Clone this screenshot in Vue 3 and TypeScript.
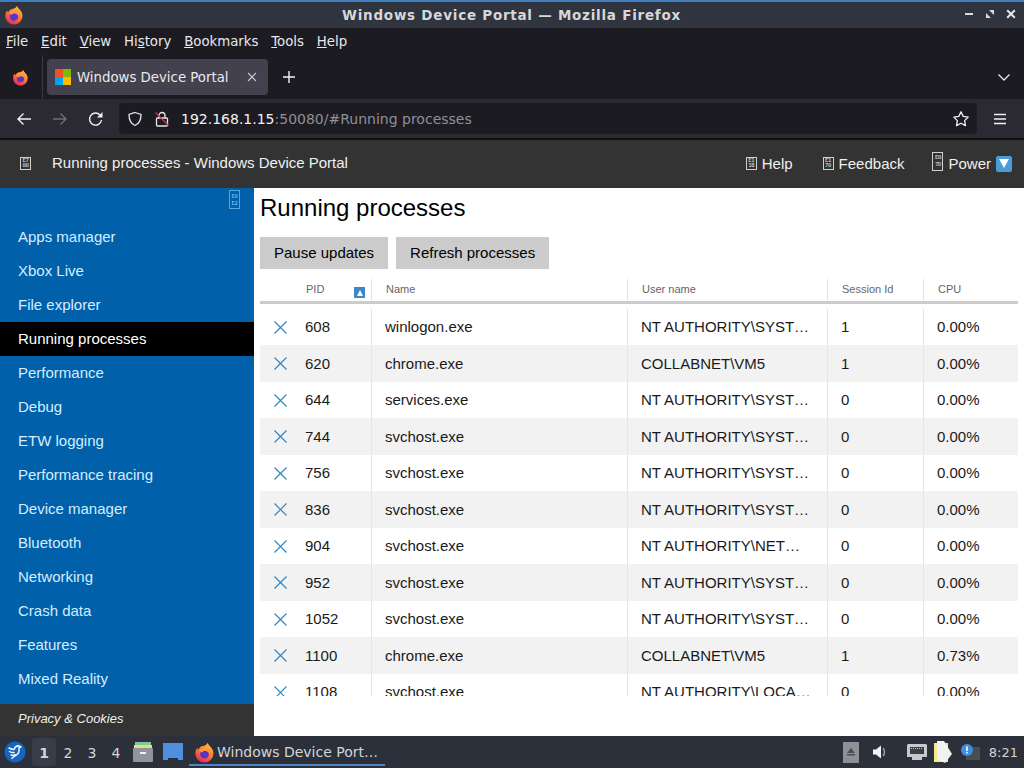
<script setup lang="ts">
interface Proc { pid: number; name: string; user: string; session: number; cpu: string }
const menus: [string, string, string][] = [
  ['', 'F', 'ile'], ['', 'E', 'dit'], ['', 'V', 'iew'], ['Hi', 's', 'tory'],
  ['', 'B', 'ookmarks'], ['', 'T', 'ools'], ['', 'H', 'elp'],
]
const nav = ['Apps manager', 'Xbox Live', 'File explorer', 'Running processes', 'Performance', 'Debug', 'ETW logging', 'Performance tracing', 'Device manager', 'Bluetooth', 'Networking', 'Crash data', 'Features', 'Mixed Reality']
const sys = 'NT AUTHORITY\\SYSTEM'
const procs: Proc[] = [
  { pid: 608, name: 'winlogon.exe', user: sys, session: 1, cpu: '0.00%' },
  { pid: 620, name: 'chrome.exe', user: 'COLLABNET\\VM5', session: 1, cpu: '0.00%' },
  { pid: 644, name: 'services.exe', user: sys, session: 0, cpu: '0.00%' },
  { pid: 744, name: 'svchost.exe', user: sys, session: 0, cpu: '0.00%' },
  { pid: 756, name: 'svchost.exe', user: sys, session: 0, cpu: '0.00%' },
  { pid: 836, name: 'svchost.exe', user: sys, session: 0, cpu: '0.00%' },
  { pid: 904, name: 'svchost.exe', user: 'NT AUTHORITY\\NETWORK', session: 0, cpu: '0.00%' },
  { pid: 952, name: 'svchost.exe', user: sys, session: 0, cpu: '0.00%' },
  { pid: 1052, name: 'svchost.exe', user: sys, session: 0, cpu: '0.00%' },
  { pid: 1100, name: 'chrome.exe', user: 'COLLABNET\\VM5', session: 1, cpu: '0.73%' },
  { pid: 1108, name: 'svchost.exe', user: 'NT AUTHORITY\\LOCAL SERVICE', session: 0, cpu: '0.00%' },
]
</script>

<template>
  <div class="screen">
    <div class="wm-strip"></div>
    <div class="titlebar">
      <svg class="ff-title" viewBox="0 0 20 20"><use href="#ff" /></svg>
      <span class="title-text">Windows Device Portal — Mozilla Firefox</span>
      <div class="wm-btns">
        <svg width="10" height="10" viewBox="0 0 10 10"><rect x="1" y="4" width="8" height="2" fill="#d8dade" /></svg>
        <svg width="10" height="10" viewBox="0 0 10 10"><path d="M4 1h5v5zM1 4l5 5H1z" fill="#d8dade" /></svg>
        <svg width="10" height="10" viewBox="0 0 10 10"><path d="M1.200 1.200l7.600 7.600M8.800 1.200L1.200 8.800" stroke="#e4e6ea" stroke-width="2" /></svg>
      </div>
    </div>
    <svg width="0" height="0" class="defs">
      <defs>
        <linearGradient id="ffg" x1="0.8" y1="0" x2="0.3" y2="1">
          <stop offset="0" stop-color="#ffc23a" />
          <stop offset="0.5" stop-color="#ff7a35" />
          <stop offset="1" stop-color="#e5265f" />
        </linearGradient>
        <g id="ff">
          <path d="M13 .8c.6 2.400 2.400 3 3.700 5 1.300 1.800 1.800 3.500 1.800 5.200a8.600 8.600 0 0 1-17.200 0c0-2.200.7-4.300 1.900-5.600.1 1 .5 1.600 1 2 .8-2.200 2.500-3.300 4.300-3.500 1.800-.3 3.700-1 4.500-3.100z" fill="url(#ffg)" />
          <circle cx="10" cy="11.500" r="4.200" fill="#5a35c8" />
          <path d="M5.500 8c1.500-2 5-2.800 7.500-1 1.500 1 2.300 3 1.900 5-.5-1.700-1.700-3.100-3.700-3.400-1.500-.2-2.700.3-3.500 1.300z" fill="#ff9a3c" />
        </g>
      </defs>
    </svg>
    <div class="menubar">
      <span v-for="m in menus" :key="m[1]" class="menu">{{ m[0] }}<u>{{ m[1] }}</u>{{ m[2] }}</span>
    </div>
    <div class="tabbar">
      <svg class="ff-tab" viewBox="0 0 20 20"><use href="#ff" /></svg>
      <div class="tab-sep"></div>
      <div class="tab">
        <span class="winlogo"><i class="q1"></i><i class="q2"></i><i class="q3"></i><i class="q4"></i></span>
        <span class="tab-text">Windows Device Portal</span>
        <svg class="tab-x" width="10" height="10" viewBox="0 0 10 10"><path d="M1 1l8 8M9 1l-8 8" stroke="#c9c9ce" stroke-width="1.100" /></svg>
      </div>
      <svg class="plus" width="14" height="14" viewBox="0 0 14 14"><path d="M7 1v12M1 7h12" stroke="#f3f3f5" stroke-width="1.400" /></svg>
      <svg class="chev" width="14" height="14" viewBox="0 0 14 14"><path d="M1.500 4.500L7 10l5.500-5.500" stroke="#e8e8ea" stroke-width="1.300" fill="none" /></svg>
    </div>
    <div class="navbar">
      <svg class="nb back" width="16" height="16" viewBox="0 0 16 16"><path d="M15 8H2M7.500 2.500L2 8l5.500 5.500" stroke="#f0f0f3" stroke-width="1.400" fill="none" /></svg>
      <svg class="nb fwd" width="16" height="16" viewBox="0 0 16 16"><path d="M1 8h13M8.500 2.500L14 8l-5.500 5.500" stroke="#6f6e77" stroke-width="1.400" fill="none" /></svg>
      <svg class="nb reload" width="16" height="16" viewBox="0 0 16 16"><path d="M13.500 9a6 6 0 1 1-1.500-5" stroke="#f0f0f3" stroke-width="1.400" fill="none" /><path d="M14.500 1v5.500H9z" fill="#f0f0f3" /></svg>
      <div class="urlbar">
        <svg class="shield" width="16" height="16" viewBox="0 0 16 16"><path d="M8 1.500l6 2c0 5-1.500 9-6 11-4.500-2-6-6-6-11z" stroke="#e6e6e9" stroke-width="1.300" fill="none" /></svg>
        <svg class="lock" width="16" height="16" viewBox="0 0 16 16"><rect x="2.500" y="7" width="11" height="8" rx="1" stroke="#e6e6e9" stroke-width="1.300" fill="none" /><path d="M5 7V4.500a3 3 0 0 1 6 0V7" stroke="#e6e6e9" stroke-width="1.300" fill="none" /><path d="M1.500 1.500l13 13" stroke="#e0304a" stroke-width="1.300" /></svg>
        <span class="url"><span class="host">192.168.1.15</span>:50080/#Running processes</span>
        <svg class="star" width="18" height="18" viewBox="0 0 18 18"><path d="M9 1.800l2.200 4.600 5 .7-3.600 3.500.9 5L9 13.200l-4.500 2.400.9-5L1.800 7.100l5-.7z" stroke="#f0f0f3" stroke-width="1.300" fill="none" stroke-linejoin="round" /></svg>
      </div>
      <svg class="burger" width="14" height="12" viewBox="0 0 14 12"><path d="M1 1.500h12M1 6h12M1 10.500h12" stroke="#f0f0f3" stroke-width="1.300" /></svg>
    </div>
    <div class="chrome-line"></div>

    <header class="portal-head">
      <span class="hex hex-menu"><b>E7</b><b>00</b></span>
      <span class="portal-title">Running processes - Windows Device Portal</span>
      <div class="portal-actions">
        <span class="action act-help"><span class="hex"><b>E1</b><b>1B</b></span>Help</span>
        <span class="action act-feedback"><span class="hex"><b>E1</b><b>70</b></span>Feedback</span>
        <span class="action power"><span class="hex hex-tall"><b>E0</b><b>7D</b></span>Power<span class="down-btn"><i></i></span></span>
      </div>
    </header>

    <div class="main">
      <aside class="sidebar">
        <div class="collapse"><span class="hex hex-side"><b>E0</b><b>E2</b></span></div>
        <nav class="nav-list">
          <a v-for="n in nav" :key="n" class="nav-item" :class="{ active: n === 'Running processes' }">{{ n }}</a>
        </nav>
        <div class="privacy">Privacy &amp; Cookies</div>
      </aside>
      <section class="content">
        <h1>Running processes</h1>
        <div class="buttons">
          <button class="btn pause">Pause updates</button>
          <button class="btn">Refresh processes</button>
        </div>
        <div class="table">
          <div class="thead grid">
            <div class="th th-pid">PID<span class="sort"><i></i></span></div>
            <div class="th">Name</div>
            <div class="th">User name</div>
            <div class="th">Session Id</div>
            <div class="th">CPU</div>
          </div>
          <div class="tbody">
            <div v-for="p in procs" :key="p.pid" class="row grid">
              <div class="td td-pid">
                <svg class="kill" width="13" height="13" viewBox="0 0 13 13"><path d="M.5.500l12 12M12.500.500l-12 12" stroke="#2a84c0" stroke-width="1.100" /></svg>
                <span>{{ p.pid }}</span>
              </div>
              <div class="td">{{ p.name }}</div>
              <div class="td user"><span class="ell">{{ p.user }}</span></div>
              <div class="td">{{ p.session }}</div>
              <div class="td">{{ p.cpu }}</div>
            </div>
          </div>
        </div>
      </section>
    </div>

    <footer class="taskbar">
      <svg class="start" width="22" height="22" viewBox="0 0 22 22"><circle cx="11" cy="11" r="10.500" fill="#1565c0" /><path d="M5 7c2 1 3.500 1.500 5 1.500M5.500 10.500c1.500 1 3 1.300 4.500 1M7 14c2 .5 3 .3 4-.5M10 8.500c1-2.500 3-4 5-3.500l2 1-2 .8c.5 3-.5 6-3 7.500-1 .7-2.500 1.200-4 3" stroke="#eef5fc" stroke-width="1.500" fill="none" stroke-linecap="round" stroke-linejoin="round" /></svg>
      <div class="workspaces">
        <span class="ws ws-on">1</span><span class="ws">2</span><span class="ws">3</span><span class="ws">4</span>
      </div>
      <svg class="tb-files" width="22" height="22" viewBox="0 0 22 22"><rect x="3" y="1" width="16" height="4" fill="#7ec99a" /><rect x="2" y="4" width="18" height="4" fill="#e8d98a" /><rect x="1" y="7" width="20" height="14" rx="1" fill="#8f959c" /><rect x="8" y="11" width="6" height="2" fill="#f2f2f2" /></svg>
      <svg class="tb-win" width="20" height="18" viewBox="0 0 20 18"><path d="M0 0h20v17h-5v-2H5v2H0z" fill="#4f8fe0" /></svg>
      <div class="task">
        <svg width="21" height="21" viewBox="0 0 20 20"><use href="#ff" /></svg>
        <span>Windows Device Port…</span>
      </div>
      <div class="tray">
        <span class="eject"><svg width="10" height="8" viewBox="0 0 10 8"><path d="M5 0l4 5H1z" fill="#4a4d52" /><rect x="1" y="6" width="8" height="1.500" fill="#4a4d52" /></svg></span>
        <svg class="vol" width="16" height="16" viewBox="0 0 16 16"><path d="M1 5.500h3L9 1.500v13l-5-4H1z" fill="#f2f3f5" /><path d="M11 4c2 2 2 6 0 8" stroke="#9aa0a8" stroke-width="1.500" fill="none" /></svg>
        <svg class="net" width="20" height="16" viewBox="0 0 20 16"><path d="M1 0h18l1 1v12h-5v3H5v-3H0V1z" fill="#c6c8cb" /><rect x="3" y="3" width="14" height="7" fill="#3a3e46" /><path d="M4 4.500h12" stroke="#c6c8cb" stroke-width="1" stroke-dasharray="1 1" /></svg>
        <svg class="notes" width="20" height="24" viewBox="0 0 20 24"><rect x="1" y="3" width="14" height="19" fill="#f4ec8a" /><path d="M4 1l7 0 8 13-7 9-8-4z" fill="#f2f2f2" /></svg>
        <span class="notify"><svg width="20" height="18" viewBox="0 0 20 18"><rect x="6" y="4" width="14" height="13" fill="#4a4d52" /><circle cx="7" cy="7" r="6" fill="#3d8fe0" /><rect x="6.200" y="3.500" width="1.600" height="4.500" fill="#fff" /><rect x="6.200" y="9" width="1.600" height="1.500" fill="#fff" /></svg></span>
        <span class="clock">8:21</span>
      </div>
      <div class="task-line"></div>
    </footer>
  </div>
</template>

<style>
html, body { margin: 0; background: #2b303b; }
</style>

<style scoped>
.screen { width: 1024px; height: 768px; display: flex; flex-direction: column; overflow: hidden; position: relative; font-family: "Liberation Sans", Arial, sans-serif; }
.defs { position: absolute; }
.wm-strip { height: 2px; background: #3f7fbf; }
.titlebar { height: 26px; display: flex; align-items: center; justify-content: center; position: relative; background: linear-gradient(#2f333d, #31353f); font-family: "DejaVu Sans", sans-serif; }
.ff-title { position: absolute; left: 4px; top: 3px; width: 20px; height: 20px; }
.title-text { color: #d5d7db; font-size: 13.500px; font-weight: 700; letter-spacing: .75px; margin-left: -1px; }
.wm-btns { position: absolute; right: 8px; top: 7px; display: flex; gap: 11px; }
.menubar { height: 27px; display: flex; align-items: center; gap: 12.800px; padding-left: 6px; box-sizing: border-box; background: #1c1b22; color: #e8e8ea; font: 13.300px "DejaVu Sans", sans-serif; }
.tabbar { height: 44px; display: flex; align-items: center; position: relative; background: #1c1b22; font-family: "DejaVu Sans", sans-serif; }
.ff-tab { width: 17px; height: 17px; margin-left: 12px; }
.tab-sep { width: 1px; height: 44px; background: #3a3942; margin-left: 13px; }
.tab { width: 221px; height: 36px; margin-left: 4px; border-radius: 4px; background: #42414d; display: flex; align-items: center; color: #e9e9ec; font-size: 13.300px; padding-left: 8px; box-sizing: border-box; }
.winlogo { width: 16px; height: 16px; display: grid; grid-template-columns: 1fr 1fr; grid-template-rows: 1fr 1fr; }
.winlogo i { display: block; }
.q1 { background: #f25022; } .q2 { background: #7fba00; } .q3 { background: #00a4ef; } .q4 { background: #ffb900; }
.tab-text { margin-left: 6px; width: 170px; }
.plus { margin-left: 14px; }
.chev { margin-left: auto; margin-right: 13px; }
.navbar { height: 39px; display: flex; align-items: center; background: #2b2a33; }
.nb { flex: none; }
.back { margin-left: 16px; }
.fwd { margin-left: 20px; }
.reload { margin-left: 20px; }
.urlbar { width: 858px; height: 31px; margin-left: 15px; background: #1c1b22; border-radius: 4px; display: flex; align-items: center; box-sizing: border-box; font: 14px "DejaVu Sans", sans-serif; color: #8f8f96; }
.shield { margin-left: 8px; }
.lock { margin-left: 11px; }
.url { margin-left: 11px; }
.host { color: #f2f2f4; }
.star { margin-left: auto; margin-right: 7px; }
.burger { margin-left: 16px; }
.chrome-line { height: 2px; background: #0f0f13; }
.portal-head { height: 48px; background: #333; display: flex; align-items: center; color: #f0f0f0; font-size: 15px; padding: 0 12px 2px 20px; box-sizing: border-box; }
.portal-title { margin-left: 21px; margin-top: -2px; }
.portal-actions { margin-left: auto; display: flex; align-items: center; }
.action { display: flex; align-items: center; gap: 5px; }
.act-help { margin-right: 30px; }
.act-feedback { margin-right: 28px; }
.power { margin-top: 1px; }
.hex { width: 11px; height: 13px; border: 1px solid #cfcfcf; box-sizing: border-box; display: inline-flex; flex-direction: column; align-items: center; justify-content: center; flex: none; color: #e6e6e6; }
.hex b { display: block; font: 400 5.500px/5.500px "DejaVu Sans Mono", monospace; letter-spacing: -.3px; }
.hex-tall { height: 19px; margin-top: -5px; }
.hex-tall b { line-height: 7px; }
.down-btn { width: 16px; height: 16px; border-radius: 2px; background: #4a9bd8; display: inline-flex; align-items: center; justify-content: center; }
.down-btn i { border-left: 5px solid transparent; border-right: 5px solid transparent; border-top: 9px solid #fff; }
.main { flex: 1; display: flex; min-height: 0; }
.sidebar { width: 254px; flex: none; background: #0060aa; display: flex; flex-direction: column; }
.collapse { height: 32px; display: flex; justify-content: flex-end; padding-right: 14px; padding-top: 2px; box-sizing: border-box; }
.hex-side { height: 19px; border-color: #5aa5dc; color: #8ecbf2; }
.hex-side b { line-height: 7px; }
.nav-list { flex: 1; display: flex; flex-direction: column; }
.nav-item { height: 34px; line-height: 34px; padding-left: 18px; font-size: 15px; color: #d4edff; flex: none; }
.nav-item.active { background: #000; color: #fff; }
.privacy { height: 32px; line-height: 30px; background: #333; color: #eee; font-size: 13px; font-style: italic; padding-left: 18px; }
.content { flex: 1; background: #fff; padding: 0 6px; display: flex; flex-direction: column; min-width: 0; }
h1 { margin: 5px 0 14px; font-size: 24px; font-weight: 400; line-height: 30px; color: #000; }
.buttons { display: flex; gap: 8px; }
.btn { height: 32px; border: 0; background: #ccc; color: #000; font: 15px "Liberation Sans", Arial, sans-serif; padding: 0 14px 2px; }
.table { margin-top: 10px; height: 417px; overflow: hidden; display: flex; flex-direction: column; }
.grid { display: grid; grid-template-columns: 112px 256px 200px 96px 94px; }
.thead { border-bottom: 3px solid #ccc; height: 22px; }
.th { font-size: 11px; color: #666; padding-left: 14px; line-height: 20px; border-right: 1px solid #e6e6e6; position: relative; }
.th:last-child { border-right: 0; }
.th-pid { padding-left: 46px; }
.sort { position: absolute; left: 94px; top: 8px; width: 11px; height: 11px; background: #3f88c5; display: flex; align-items: center; justify-content: center; }
.sort i { border-left: 3.500px solid transparent; border-right: 3.500px solid transparent; border-bottom: 6px solid #fff; }
.tbody { flex: 1; overflow: hidden; padding-top: 5px; }
.row { height: 36px; }
.row:nth-child(even) { background: #f2f2f2; height: 37px; }
.td { font-size: 15px; line-height: 36px; color: #1a1a1a; padding-left: 13px; border-right: 1px solid #e6e6e6; min-width: 0; white-space: nowrap; }
.row:nth-child(even) .td { line-height: 37px; }
.td:last-child { border-right: 0; }
.td-pid { padding-left: 14px; display: flex; align-items: center; }
.td-pid span { margin-left: 18px; }
.kill { flex: none; }
.user { padding-right: 16px; }
.ell { display: block; overflow: hidden; text-overflow: ellipsis; white-space: nowrap; }
.taskbar { height: 32px; background: #2b303b; display: flex; align-items: center; position: relative; font-family: "DejaVu Sans", sans-serif; color: #d3d5d9; }
.start { margin-left: 4px; }
.workspaces { display: flex; margin-left: 6px; }
.ws { width: 24px; height: 28px; line-height: 30px; text-align: center; font-size: 14px; box-sizing: border-box; }
.ws-on { background: #383d48; font-weight: 700; border-radius: 3px; }
.tb-files { margin-left: 4px; }
.tb-win { margin-left: 9px; }
.task { display: flex; align-items: center; margin-left: 11px; gap: 2px; font-size: 14px; white-space: nowrap; }
.task-line { position: absolute; left: 189px; width: 196px; bottom: 2px; height: 2px; background: #4d86c6; }
.tray { margin-left: auto; display: flex; align-items: center; padding-right: 6px; }
.eject { width: 16px; height: 21px; background: #8d9094; display: flex; align-items: center; justify-content: center; margin-right: 13px; }
.vol { margin-right: 19px; }
.net { margin-right: 6px; }
.notes { margin-right: 7px; }
.notify { margin-right: 9px; display: flex; }
.clock { font-size: 13px; }
</style>
